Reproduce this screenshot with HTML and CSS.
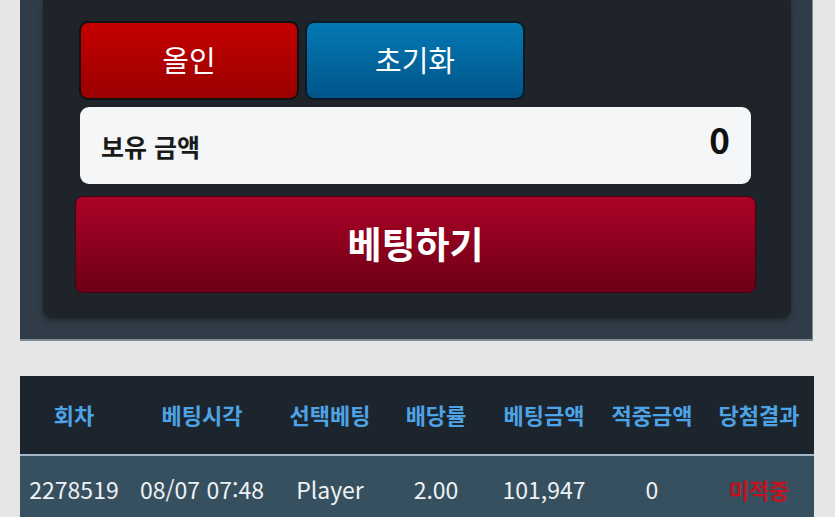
FILE: index.html
```html
<!DOCTYPE html>
<html lang="ko">
<head>
<meta charset="utf-8">
<link rel="stylesheet" href="styles.css">
</head>
<body>
<div class="outer">
  <div class="inner">
    <div class="btn-row">
      <button class="btn btn-red">올인</button>
      <button class="btn btn-blue">초기화</button>
    </div>
    <div class="hold">
      <span class="hold-label">보유 금액</span>
      <span class="hold-value">0</span>
    </div>
    <button class="bet">베팅하기</button>
  </div>
</div>
<div class="table">
  <div class="thead">
    <div>회차</div><div>베팅시각</div><div>선택베팅</div><div>배당률</div><div>베팅금액</div><div>적중금액</div><div>당첨결과</div>
  </div>
  <div class="trow">
    <div>2278519</div><div>08/07 07:48</div><div>Player</div><div>2.00</div><div>101,947</div><div>0</div><div class="miss">미적중</div>
  </div>
</div>
</body>
</html>
```
FILE: styles.css
```css
html, body {
  margin: 0;
  padding: 0;
  background: #e6e6e6;
  font-family: "Noto Sans CJK KR", "Noto Sans", sans-serif;
}
.outer {
  margin-left: 20px;
  width: 793px;
  background: #303d48;
  border-right: 1px solid #7f8d98;
  border-bottom: 2px solid #7f8d98;
  padding: 0 21px 21px 23px;
  box-sizing: border-box;
}
.inner {
  background: #1e2429;
  border-radius: 0 0 9px 9px;
  padding: 21px 40px 25px 36px;
  box-shadow: 0 3px 6px rgba(0,0,0,0.35);
  display: flex;
  flex-direction: column;
}
.btn-row {
  display: flex;
  gap: 6px;
}
.btn {
  width: 220px;
  height: 79px;
  border-radius: 9px;
  border: 2px solid #111;
  color: #fff;
  font-family: inherit;
  font-size: 29px;
  font-weight: 400;
  padding: 0 0 4px 0;
  box-sizing: border-box;
}
.btn-red {
  background: linear-gradient(#c40000, #9a0000);
}
.btn-blue {
  background: linear-gradient(#0479b3, #00558a);
  border-color: #0b1a26;
}
.hold {
  margin-top: 7px;
  margin-left: 1px;
  height: 77px;
  background: #f5f6f8;
  border-radius: 9px;
  display: flex;
  align-items: center;
  justify-content: space-between;
  padding: 0 21px 0 21px;
  box-sizing: border-box;
}
.hold-label {
  font-size: 25px;
  font-weight: 700;
  color: #1a1a1a;
  padding-top: 0;
}
.hold-value {
  font-size: 35px;
  font-weight: 700;
  color: #111;
  padding-bottom: 14px;
}
.bet {
  margin: 12px -5px 0 -4px;
  height: 97px;
  border-radius: 8px;
  border: 1px solid #4a0010;
  background: linear-gradient(#ab0227, #6c0015);
  color: #fff;
  font-family: inherit;
  font-size: 37px;
  font-weight: 700;
  padding: 0 0 4px 0;
}
.table {
  margin: 35px 0 0 20px;
  width: 794px;
}
.thead, .trow {
  display: grid;
  grid-template-columns: 108px 148px 108px 104px 112px 104px 110px;
  text-align: center;
}
.thead {
  background: #1c252d;
  height: 78px;
  align-items: center;
  border-bottom: 2px solid #a3b7c6;
  color: #4ea3e6;
  font-size: 22px;
  font-weight: 700;
}
.thead div {
  padding-bottom: 2px;
}
.trow {
  background: #36505f;
  height: 68px;
  align-items: center;
  color: #eef2f5;
  font-size: 23px;
}
.trow div {
  padding-bottom: 2px;
}
.trow .miss {
  color: #c2121d;
  font-weight: 700;
  font-size: 22px;
}
```
